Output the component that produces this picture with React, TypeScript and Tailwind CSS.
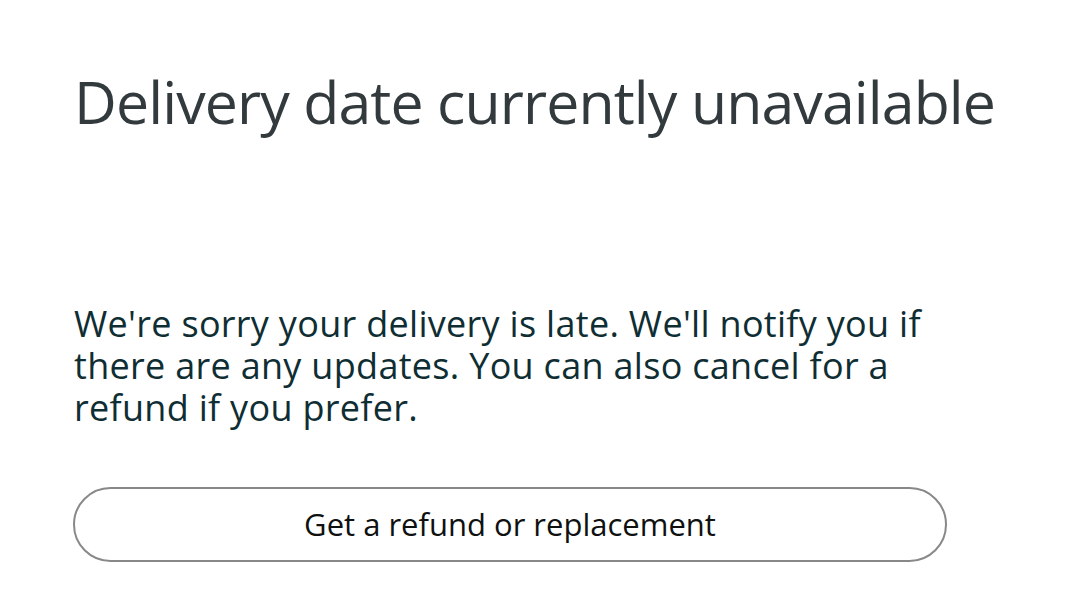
import React from 'react';

const App = () => {
  return (
    <div className="min-h-screen bg-white px-[73px] pt-[61px]" style={{ fontFamily: '"Open Sans", "Noto Sans", sans-serif' }}>
      <h1 className="ml-[1px] whitespace-nowrap text-[59px] leading-[80px] text-[#333a3d] tracking-[-0.9px]">
        Delivery date currently unavailable
      </h1>

      <p className="ml-[1px] mt-[162px] w-[890px] text-[36px] leading-[42px] tracking-[0.3px] text-[#0f2e33]">
        We're sorry your delivery is late. We'll notify you if there are any updates. You can also cancel for a refund if you prefer.
      </p>

      <button className="mt-[58px] flex h-[75px] w-[874px] items-center justify-center rounded-full border-2 border-[#888888] bg-white text-[31px] text-[#0f1111]">
        Get a refund or replacement
      </button>
    </div>
  );
};

export default App;
